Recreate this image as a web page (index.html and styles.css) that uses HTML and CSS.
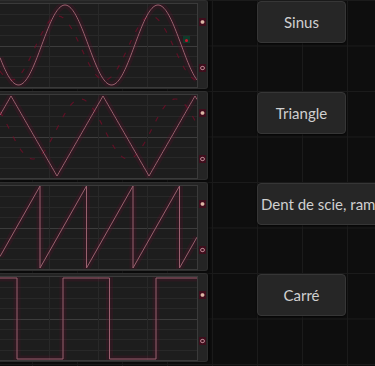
FILE: index.html
```html
<!DOCTYPE html>
<html lang="fr">
<head>
    <meta charset="UTF-8">
    <meta name="viewport" content="width=device-width, initial-scale=1.0">
    <title>Formes d'onde</title>
    <link rel="stylesheet" href="styles.css">
</head>
<body>
    <div class="rack">
        <div class="row">
            <div class="scope">
                <svg class="plot" data-wave="sine" width="197" height="83"></svg>
                <div class="pins"><span class="pin pin-in"></span><span class="pin pin-out"></span></div>
            </div>
            <div class="slot"><button class="wave-btn">Sinus</button></div>
        </div>
        <div class="row">
            <div class="scope">
                <svg class="plot" data-wave="triangle" width="197" height="83"></svg>
                <div class="pins"><span class="pin pin-in"></span><span class="pin pin-out"></span></div>
            </div>
            <div class="slot"><button class="wave-btn">Triangle</button></div>
        </div>
        <div class="row">
            <div class="scope">
                <svg class="plot" data-wave="saw" width="197" height="83"></svg>
                <div class="pins"><span class="pin pin-in"></span><span class="pin pin-out"></span></div>
            </div>
            <div class="slot"><button class="wave-btn">Dent de scie, rampe</button></div>
        </div>
        <div class="row">
            <div class="scope">
                <svg class="plot" data-wave="square" width="197" height="83"></svg>
                <div class="pins"><span class="pin pin-in"></span><span class="pin pin-out"></span></div>
            </div>
            <div class="slot"><button class="wave-btn">Carré</button></div>
        </div>
    </div>

    <script>
        const W = 197;
        const H = 83;
        const NS = 'http://www.w3.org/2000/svg';

        function sampled(f) {
            let d = '';
            for (let x = 0; x <= W; x++) {
                d += (x ? 'L' : 'M') + x + ' ' + f(x).toFixed(2) + ' ';
            }
            return d;
        }

        function frac(v) {
            return ((v % 1) + 1) % 1;
        }

        function sawPath() {
            const y = x => 82 * (1 - frac((x - 40) / 46.5));
            let d = 'M0 ' + y(0).toFixed(2);
            [40, 86.5, 133, 179.5].forEach(t => {
                d += ` L${t} 0 L${t} 82`;
            });
            return d + ' L' + W + ' ' + y(W - 0.01).toFixed(2);
        }

        const waves = {
            sine: {
                main: sampled(x => 41 - 40 * Math.cos(2 * Math.PI * (x - 65) / 93)),
                ghost: sampled(x => 44 - 32 * Math.cos(2 * Math.PI * (x - 58) / 93))
            },
            triangle: {
                main: sampled(x => 1 + 80 * (1 - Math.abs(1 - 2 * frac((x - 11) / 92)))),
                ghost: sampled(x => 34 + 30 * Math.cos(2 * Math.PI * (x - 33) / 95))
            },
            saw: { main: sawPath() },
            square: { main: 'M0 1 L17 1 L17 82 L63 82 L63 1 L109.5 1 L109.5 82 L156 82 L156 1 L197 1' }
        };

        function add(svg, tag, attrs) {
            const el = document.createElementNS(NS, tag);
            for (const k in attrs) el.setAttribute(k, attrs[k]);
            svg.appendChild(el);
            return el;
        }

        document.querySelectorAll('.plot').forEach(svg => {
            svg.setAttribute('viewBox', `0 0 ${W} ${H}`);
            // grid
            for (let i = 1; i < 8; i++) {
                const y = Math.round(i * H / 8) + 0.5;
                add(svg, 'line', { x1: 0, x2: W, y1: y, y2: y, class: i === 4 ? 'grid-mid' : 'grid' });
            }
            [49, 98, 147].forEach(x => {
                add(svg, 'line', { x1: x + 0.5, x2: x + 0.5, y1: 0, y2: H, class: 'grid' });
            });

            const wave = waves[svg.dataset.wave];
            add(svg, 'path', { d: wave.main, class: 'glow' });
            if (wave.ghost) add(svg, 'path', { d: wave.ghost, class: 'ghost' });
            add(svg, 'path', { d: wave.main, class: 'trace' });

            if (svg.dataset.wave === 'sine') {
                add(svg, 'rect', { x: 183, y: 32, width: 7, height: 7, class: 'probe' });
                add(svg, 'circle', { cx: 186.5, cy: 36.5, r: 1.5, class: 'probe-dot' });
            }
        });
    </script>
</body>
</html>
```

FILE: styles.css
```css
body {
    margin: 0;
    height: 100vh;
    overflow: hidden;
    font-family: Lato, "Open Sans", sans-serif;
    background-color: #0e0e0e;
    background-image:
        linear-gradient(to right, #1b1b1b 1px, transparent 1px),
        linear-gradient(to bottom, #1b1b1b 1px, transparent 1px);
    background-size: 45px 45.5px;
    background-position: 212px 0;
}
.row {
    display: flex;
    height: 91px;
}
.scope {
    display: flex;
    flex-shrink: 0;
    width: 208px;
    height: 89px;
    box-sizing: border-box;
    padding-top: 2px;
    background-color: #242424;
    border: 1px solid #2e2e2e;
    border-left: none;
    border-radius: 0 3px 3px 0;
    box-shadow: 2px 0 3px rgba(0, 0, 0, 0.5);
}
.plot {
    display: block;
    flex-shrink: 0;
    width: 197px;
    height: 83px;
    background-color: #1d1d1d;
    border: 1px solid #3a3a3a;
    border-left: none;
}
.plot .grid {
    stroke: #282828;
    stroke-width: 1;
}
.plot .grid-mid {
    stroke: #3c3c3c;
    stroke-width: 1;
}
.plot .glow {
    fill: none;
    stroke: #5c0f2a;
    stroke-width: 7;
    opacity: 0.25;
}
.plot .ghost {
    fill: none;
    stroke: #7a0c2a;
    stroke-width: 1.2;
    stroke-dasharray: 5 9;
    opacity: 0.7;
}
.plot .trace {
    fill: none;
    stroke: #99606e;
    stroke-width: 1;
}
.plot .probe {
    fill: #0f3a2a;
}
.plot .probe-dot {
    fill: #d0102e;
}
.pins {
    flex: 1;
    display: flex;
    flex-direction: column;
    align-items: center;
    gap: 38px;
    padding-top: 15px;
}
.pin {
    width: 7px;
    height: 8px;
    background-color: #3e0e1c;
}
.pin-in {
    background-image: radial-gradient(circle, #d8b8a4 1.2px, #9a6468 1.8px, transparent 2.4px);
}
.pin-out {
    background-image: radial-gradient(circle, transparent 1px, #a87480 1.3px, #a87480 2px, transparent 2.6px);
}
.slot {
    display: flex;
    align-items: flex-start;
    padding-left: 49px;
    padding-top: 1px;
}
.wave-btn {
    flex-shrink: 0;
    height: 42px;
    min-width: 89px;
    padding: 0 3px;
    font-family: Lato, "Open Sans", sans-serif;
    font-size: 15px;
    color: #d0d0d0;
    white-space: nowrap;
    background-color: #262626;
    border: 1px solid #363636;
    border-radius: 4px;
    box-shadow: 0 1px 2px rgba(0, 0, 0, 0.6);
    cursor: pointer;
}
```
